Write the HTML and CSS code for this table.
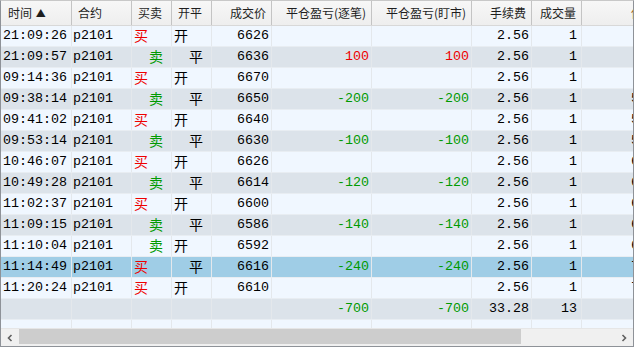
FILE: index.html
```html
<!DOCTYPE html>
<html>
<head>
<meta charset="utf-8">
<link rel="stylesheet" href="styles.css">
</head>
<body>
<div class="grid">
  <div class="viewport">
    <div class="head">
      <div class="hc c1 l">时间 <span class="arrow">▲</span></div>
      <div class="hc c2 l">合约</div>
      <div class="hc c3 l">买卖</div>
      <div class="hc c4 l">开平</div>
      <div class="hc c5 r">成交价</div>
      <div class="hc c6 r">平仓盈亏(逐笔)</div>
      <div class="hc c7 r">平仓盈亏(盯市)</div>
      <div class="hc c8 r">手续费</div>
      <div class="hc c9 r">成交量</div>
      <div class="hc c10 l">保证金</div>
    </div>

    <div class="row odd"><div class="c c1">21:09:26</div><div class="c c2">p2101</div><div class="c c3"><span class="cn buy">买</span></div><div class="c c4"><span class="cn">开</span></div><div class="c c5 r">6626</div><div class="c c6 r"></div><div class="c c7 r"></div><div class="c c8 r">2.56</div><div class="c c9 r">1</div><div class="c c10"></div></div>
    <div class="row even"><div class="c c1">21:09:57</div><div class="c c2">p2101</div><div class="c c3 ind"><span class="cn sell">卖</span></div><div class="c c4 ind"><span class="cn">平</span></div><div class="c c5 r">6636</div><div class="c c6 r red">100</div><div class="c c7 r red">100</div><div class="c c8 r">2.56</div><div class="c c9 r">1</div><div class="c c10"></div></div>
    <div class="row odd"><div class="c c1">09:14:36</div><div class="c c2">p2101</div><div class="c c3"><span class="cn buy">买</span></div><div class="c c4"><span class="cn">开</span></div><div class="c c5 r">6670</div><div class="c c6 r"></div><div class="c c7 r"></div><div class="c c8 r">2.56</div><div class="c c9 r">1</div><div class="c c10">.</div></div>
    <div class="row even"><div class="c c1">09:38:14</div><div class="c c2">p2101</div><div class="c c3 ind"><span class="cn sell">卖</span></div><div class="c c4 ind"><span class="cn">平</span></div><div class="c c5 r">6650</div><div class="c c6 r grn">-200</div><div class="c c7 r grn">-200</div><div class="c c8 r">2.56</div><div class="c c9 r">1</div><div class="c c10">5</div></div>
    <div class="row odd"><div class="c c1">09:41:02</div><div class="c c2">p2101</div><div class="c c3"><span class="cn buy">买</span></div><div class="c c4"><span class="cn">开</span></div><div class="c c5 r">6640</div><div class="c c6 r"></div><div class="c c7 r"></div><div class="c c8 r">2.56</div><div class="c c9 r">1</div><div class="c c10">5</div></div>
    <div class="row even"><div class="c c1">09:53:14</div><div class="c c2">p2101</div><div class="c c3 ind"><span class="cn sell">卖</span></div><div class="c c4 ind"><span class="cn">平</span></div><div class="c c5 r">6630</div><div class="c c6 r grn">-100</div><div class="c c7 r grn">-100</div><div class="c c8 r">2.56</div><div class="c c9 r">1</div><div class="c c10">5</div></div>
    <div class="row odd"><div class="c c1">10:46:07</div><div class="c c2">p2101</div><div class="c c3"><span class="cn buy">买</span></div><div class="c c4"><span class="cn">开</span></div><div class="c c5 r">6626</div><div class="c c6 r"></div><div class="c c7 r"></div><div class="c c8 r">2.56</div><div class="c c9 r">1</div><div class="c c10">6</div></div>
    <div class="row even"><div class="c c1">10:49:28</div><div class="c c2">p2101</div><div class="c c3 ind"><span class="cn sell">卖</span></div><div class="c c4 ind"><span class="cn">平</span></div><div class="c c5 r">6614</div><div class="c c6 r grn">-120</div><div class="c c7 r grn">-120</div><div class="c c8 r">2.56</div><div class="c c9 r">1</div><div class="c c10">6</div></div>
    <div class="row odd"><div class="c c1">11:02:37</div><div class="c c2">p2101</div><div class="c c3"><span class="cn buy">买</span></div><div class="c c4"><span class="cn">开</span></div><div class="c c5 r">6600</div><div class="c c6 r"></div><div class="c c7 r"></div><div class="c c8 r">2.56</div><div class="c c9 r">1</div><div class="c c10">6</div></div>
    <div class="row even"><div class="c c1">11:09:15</div><div class="c c2">p2101</div><div class="c c3 ind"><span class="cn sell">卖</span></div><div class="c c4 ind"><span class="cn">平</span></div><div class="c c5 r">6586</div><div class="c c6 r grn">-140</div><div class="c c7 r grn">-140</div><div class="c c8 r">2.56</div><div class="c c9 r">1</div><div class="c c10">6</div></div>
    <div class="row odd"><div class="c c1">11:10:04</div><div class="c c2">p2101</div><div class="c c3 ind"><span class="cn sell">卖</span></div><div class="c c4"><span class="cn">开</span></div><div class="c c5 r">6592</div><div class="c c6 r"></div><div class="c c7 r"></div><div class="c c8 r">2.56</div><div class="c c9 r">1</div><div class="c c10">6</div></div>
    <div class="row sel"><div class="c c1">11:14:49</div><div class="c c2">p2101</div><div class="c c3"><span class="cn buy">买</span></div><div class="c c4 ind"><span class="cn">平</span></div><div class="c c5 r">6616</div><div class="c c6 r grn">-240</div><div class="c c7 r grn">-240</div><div class="c c8 r">2.56</div><div class="c c9 r">1</div><div class="c c10">7</div></div>
    <div class="row odd"><div class="c c1">11:20:24</div><div class="c c2">p2101</div><div class="c c3"><span class="cn buy">买</span></div><div class="c c4"><span class="cn">开</span></div><div class="c c5 r">6610</div><div class="c c6 r"></div><div class="c c7 r"></div><div class="c c8 r">2.56</div><div class="c c9 r">1</div><div class="c c10">7</div></div>
    <div class="row even"><div class="c c1"></div><div class="c c2"></div><div class="c c3"></div><div class="c c4"></div><div class="c c5 r"></div><div class="c c6 r grn">-700</div><div class="c c7 r grn">-700</div><div class="c c8 r">33.28</div><div class="c c9 r">13</div><div class="c c10"></div></div>
    <div class="row odd"><div class="c c1"></div><div class="c c2"></div><div class="c c3"></div><div class="c c4"></div><div class="c c5"></div><div class="c c6"></div><div class="c c7"></div><div class="c c8"></div><div class="c c9"></div><div class="c c10"></div></div>
  </div>
  <div class="hscroll">
    <div class="sbtn"><svg width="8" height="8" viewBox="0 0 8 8"><path d="M5.5 1 L2.5 4 L5.5 7" fill="none" stroke="#606060" stroke-width="1.6"/></svg></div>
    <div class="thumb"></div>
    <div class="track"></div>
    <div class="sbtn"><svg width="8" height="8" viewBox="0 0 8 8"><path d="M2.5 1 L5.5 4 L2.5 7" fill="none" stroke="#606060" stroke-width="1.6"/></svg></div>
  </div>
</div>
</body>
</html>
```
FILE: styles.css
```css
html, body {
  margin: 0;
  padding: 0;
  background: #ffffff;
}
.grid {
  width: 634px;
  height: 347px;
  box-sizing: border-box;
  border: 1px solid #8e9298;
  border-top-color: #c8c8c8;
  display: flex;
  flex-direction: column;
  overflow: hidden;
  background: #f0f7ff;
}
.viewport {
  height: 327px;
  overflow: hidden;
  flex: none;
}
.head {
  display: flex;
  height: 24px;
  background: linear-gradient(#f7f7f7, #eeeeee);
  border-bottom: 1px solid #d8d8d8;
  font-family: "Noto Sans CJK SC", "Noto Sans", sans-serif;
  font-size: 12px;
  color: #1e1e1e;
}
.hc {
  flex: none;
  box-sizing: border-box;
  border-right: 1px solid #c4c4c4;
  line-height: 23px;
  white-space: nowrap;
  overflow: hidden;
}
.hc.l { padding-left: 6px; }
.hc.r { text-align: right; padding-right: 5px; }
.hc.c1 { padding-left: 7px; }
.arrow { font-size: 10px; position: relative; top: -1px; margin-left: 1px; }
.hc.c10 { border-right: none; padding-left: 49px; color: #a06020; }

.row {
  display: flex;
  height: 21px;
  box-sizing: border-box;
  border-bottom: 1px solid #e8edf2;
  font-family: "Liberation Mono", "DejaVu Sans Mono", monospace;
  font-size: 13.33px;
  color: #000;
}
.row.odd { background: #f0f7ff; }
.row.even { background: #dce3ea; }
.row.sel { background: #9fcde6; }
.c {
  flex: none;
  box-sizing: border-box;
  border-right: 1px solid #e4e8ec;
  height: 20px;
  line-height: 20px;
  white-space: pre;
  overflow: hidden;
  padding-left: 2px;
}
.c.r { text-align: right; padding-left: 0; padding-right: 2px; }
.c.c9.r { padding-right: 4px; }
.c.c10 { border-right: none; padding-left: 49px; }
.c.ind { padding-left: 17px; }
.c2 { padding-left: 1px; }

.c1 { width: 71px; }
.c2 { width: 60px; }
.c3 { width: 40px; }
.c4 { width: 40px; }
.c5 { width: 60px; }
.c6 { width: 100px; }
.c7 { width: 100px; }
.c8 { width: 60px; }
.c9 { width: 50px; }
.c10 { width: 120px; }

.cn {
  display: inline-block;
  vertical-align: top;
  font-family: "Noto Sans CJK SC", sans-serif;
  font-size: 14px;
  line-height: 18px;
}
.buy { color: #ee0000; }
.sell { color: #009a00; }
.red { color: #ee0000; }
.grn { color: #009a00; }

.hscroll {
  height: 18px;
  flex: none;
  display: flex;
  background: #f0f0f0;
  border-top: 1px solid #e6e6e6;
}
.sbtn {
  width: 18px;
  flex: none;
  display: flex;
  align-items: center;
  justify-content: center;
}
.thumb {
  width: 502px;
  flex: none;
  height: 15px;
  background: #cdcdcd;
}
.track { flex: 1; }
```
